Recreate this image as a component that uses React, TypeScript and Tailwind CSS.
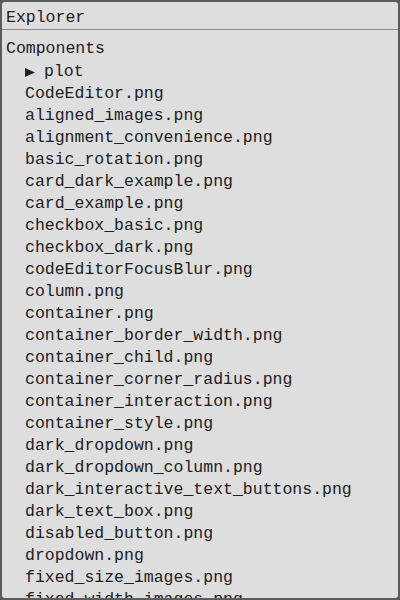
import React from 'react';

const files = [
  'CodeEditor.png',
  'aligned_images.png',
  'alignment_convenience.png',
  'basic_rotation.png',
  'card_dark_example.png',
  'card_example.png',
  'checkbox_basic.png',
  'checkbox_dark.png',
  'codeEditorFocusBlur.png',
  'column.png',
  'container.png',
  'container_border_width.png',
  'container_child.png',
  'container_corner_radius.png',
  'container_interaction.png',
  'container_style.png',
  'dark_dropdown.png',
  'dark_dropdown_column.png',
  'dark_interactive_text_buttons.png',
  'dark_text_box.png',
  'disabled_button.png',
  'dropdown.png',
  'fixed_size_images.png',
  'fixed_width_images.png',
];

function App() {
  return (
    <div className="w-[400px] h-[600px] overflow-hidden bg-[#5c5c5c]">
      <div
        className="flex flex-col w-full h-full rounded-[5px] border-2 border-[#5c5c5c] bg-[#dedede] text-[#202020] text-[16.5px] overflow-hidden"
        style={{ fontFamily: '"Liberation Mono", monospace' }}
      >
        <div className="h-[28px] flex items-center pt-[5px] px-[4px] border-b border-[#8a8a8a] shrink-0">
          Explorer
        </div>
        <div className="px-[4px] pt-[8px] leading-[22px]">
          <div className="h-[23px]">Components</div>
          <div className="pl-[19px]">
            <div className="flex items-center">
              <svg width="10" height="9" viewBox="0 0 10 9" className="mr-[9px]">
                <path d="M0 0 L10 4.5 L0 9 Z" fill="#202020" />
              </svg>
              <span>plot</span>
            </div>
            {files.map((f) => (
              <div key={f} className="whitespace-nowrap">{f}</div>
            ))}
          </div>
        </div>
      </div>
    </div>
  );
}

export default App;
